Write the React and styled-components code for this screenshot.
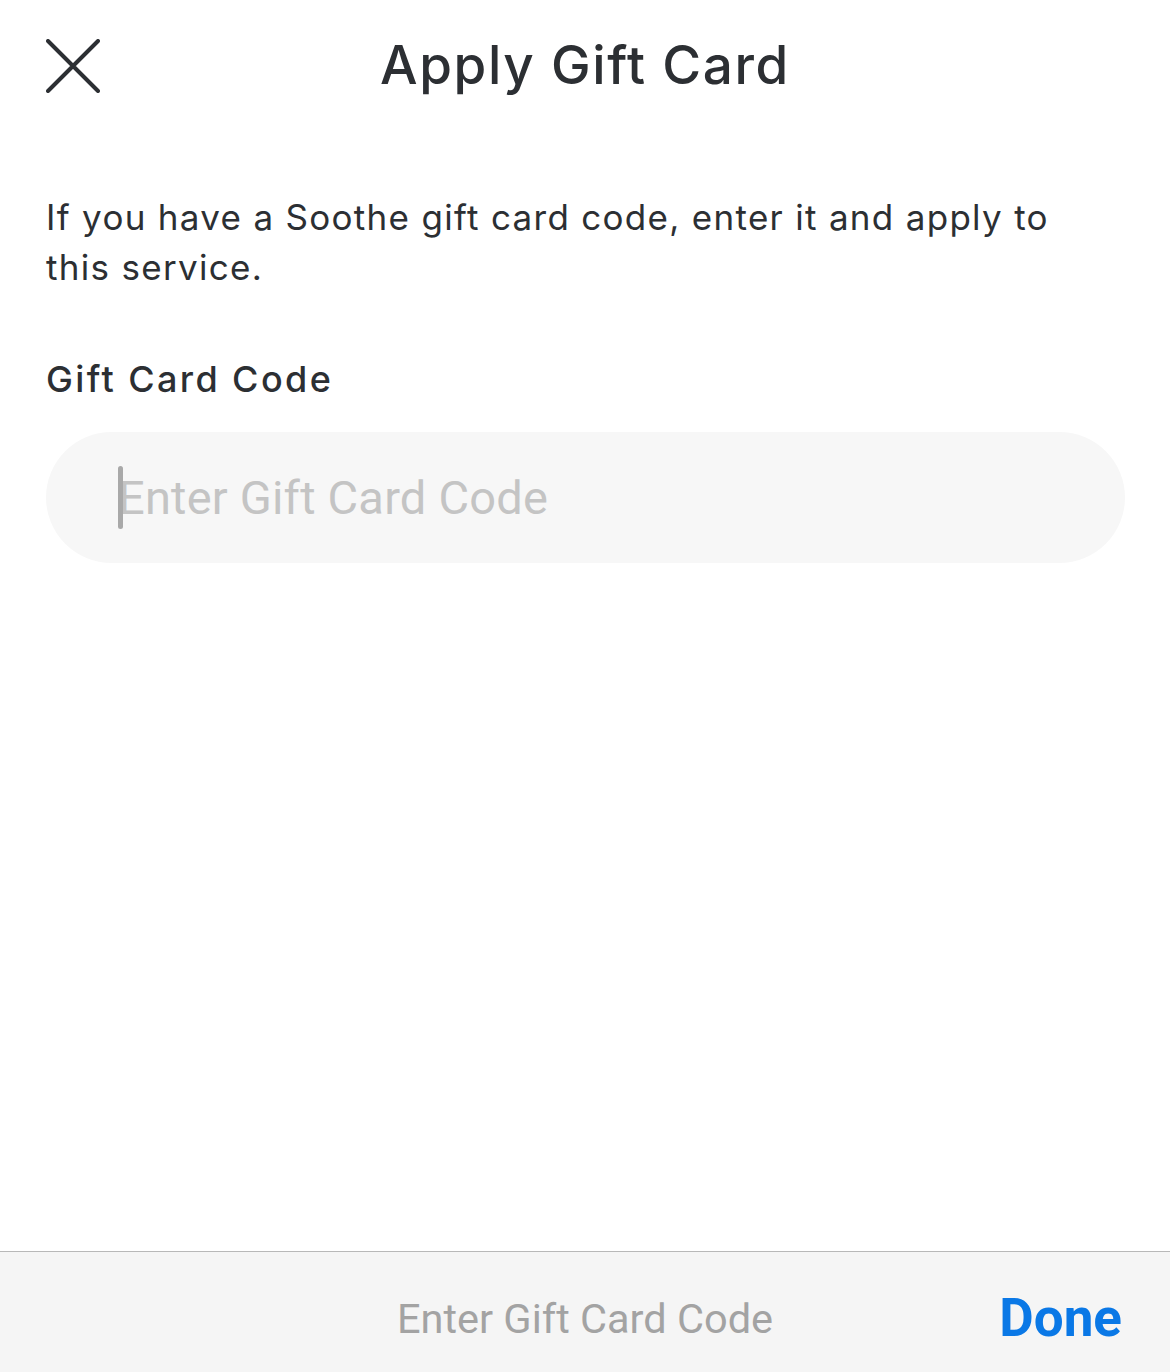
import React from 'react';
import styled, { createGlobalStyle } from 'styled-components';

const GlobalStyle = createGlobalStyle`
  html, body {
    margin: 0;
    padding: 0;
    background: #ffffff;
  }
  body {
    font-family: Inter, "Noto Sans", sans-serif;
    -webkit-font-smoothing: antialiased;
  }
`;

const App = () => {
  return (
    <Screen>
      <GlobalStyle />
      <Header>
        <CloseButton aria-label="Close">
          <svg width="54" height="54" viewBox="0 0 54 54" fill="none">
            <path d="M2 2 L52 52 M52 2 L2 52" stroke="#2c2f33" strokeWidth="4" strokeLinecap="round" />
          </svg>
        </CloseButton>
        <Title>Apply Gift Card</Title>
      </Header>

      <Content>
        <Description>
          If you have a Soothe gift card code, enter it and apply to this service.
        </Description>
        <Label>Gift Card Code</Label>
        <InputWrap>
          <Caret />
          <CodeInput placeholder="Enter Gift Card Code" />
        </InputWrap>
      </Content>

      <Toolbar>
        <ToolbarHint>Enter Gift Card Code</ToolbarHint>
        <DoneButton>Done</DoneButton>
      </Toolbar>
    </Screen>
  );
};

export default App;

const Screen = styled.div`
  height: 1372px;
  display: flex;
  flex-direction: column;
  background: #ffffff;
  color: #2c2f33;
`;

const Header = styled.div`
  position: relative;
  height: 130px;
  display: flex;
  align-items: center;
  justify-content: center;
`;

const CloseButton = styled.button`
  position: absolute;
  left: 46px;
  top: 39px;
  padding: 0;
  border: none;
  background: none;
  display: flex;
  cursor: pointer;
`;

const Title = styled.h1`
  margin: 0;
  font-size: 53px;
  font-weight: 500;
  letter-spacing: 1.6px;
  color: #2c2f33;
`;

const Content = styled.div`
  flex: 1;
  padding: 62px 45px 0 46px;
  display: flex;
  flex-direction: column;
`;

const Description = styled.p`
  margin: 0;
  max-width: 1015px;
  font-size: 35px;
  line-height: 50px;
  font-weight: 400;
  letter-spacing: 1.3px;
  color: #2c2f33;
`;

const Label = styled.div`
  margin-top: 62px;
  font-size: 36px;
  font-weight: 500;
  line-height: 50px;
  letter-spacing: 2.4px;
  color: #2c2f33;
`;

const InputWrap = styled.div`
  position: relative;
  margin-top: 28px;
  height: 131px;
  border-radius: 66px;
  background: #f7f7f7;
  display: flex;
  align-items: center;
  padding: 0 40px 0 72px;
`;

const Caret = styled.span`
  position: absolute;
  left: 72px;
  top: 34px;
  width: 5px;
  height: 63px;
  border-radius: 3px;
  background: #a9a9a9;
`;

const CodeInput = styled.input`
  flex: 1;
  min-width: 0;
  border: none;
  outline: none;
  background: transparent;
  font-family: Roboto, "Liberation Sans", sans-serif;
  font-size: 47px;
  letter-spacing: 0.2px;
  color: #2c2f33;
  padding: 0;
  caret-color: transparent;

  &::placeholder {
    color: #c4c4c4;
  }
`;

const Toolbar = styled.div`
  height: 121px;
  box-sizing: border-box;
  padding-top: 12px;
  border-top: 1px solid #b8b8b8;
  background: #f5f5f5;
  display: flex;
  align-items: center;
  justify-content: center;
  position: relative;
`;

const ToolbarHint = styled.span`
  font-family: Roboto, "Liberation Sans", sans-serif;
  font-size: 41.5px;
  color: #a3a3a3;
`;

const DoneButton = styled.button`
  position: absolute;
  right: 48px;
  top: 66px;
  transform: translateY(-50%);
  border: none;
  background: none;
  padding: 0;
  font-family: Roboto, "Liberation Sans", sans-serif;
  font-size: 53px;
  font-weight: 700;
  color: #0a78e6;
  cursor: pointer;
`;
